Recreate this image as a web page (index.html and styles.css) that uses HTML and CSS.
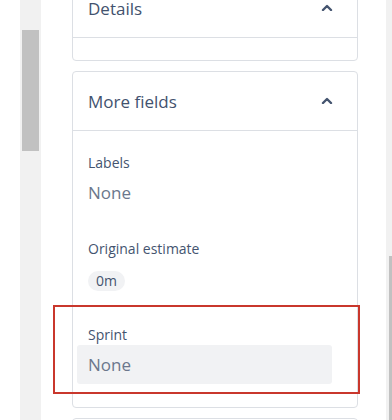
FILE: index.html
```html
<!DOCTYPE html>
<html lang="en">
<head>
    <meta charset="utf-8">
    <title>Issue fields</title>
    <link rel="stylesheet" href="styles.css">
</head>
<body>
    <div class="page">
        <div class="scrollbar left"><div class="thumb"></div></div>
        <main class="panel">
            <section class="card">
                <header class="card-head">
                    <h2>Details</h2>
                    <svg class="chevron" width="12" height="8" viewBox="0 0 12 8"><path d="M2 7 6 3 10 7" fill="none" stroke="currentColor" stroke-width="2.4" stroke-linecap="round" stroke-linejoin="round"/></svg>
                </header>
                <div class="card-body empty"></div>
            </section>
            <section class="card">
                <header class="card-head">
                    <h2>More fields</h2>
                    <svg class="chevron" width="12" height="8" viewBox="0 0 12 8"><path d="M2 7 6 3 10 7" fill="none" stroke="currentColor" stroke-width="2.4" stroke-linecap="round" stroke-linejoin="round"/></svg>
                </header>
                <div class="card-body">
                    <div class="field">
                        <div class="label">Labels</div>
                        <div class="value">None</div>
                    </div>
                    <div class="field">
                        <div class="label">Original estimate</div>
                        <span class="badge">0m</span>
                    </div>
                    <div class="field highlighted">
                        <div class="label">Sprint</div>
                        <div class="value input">None</div>
                    </div>
                </div>
            </section>
            <section class="card"></section>
        </main>
        <div class="scrollbar right"><div class="thumb"></div></div>
    </div>
</body>
</html>
```

FILE: styles.css
```css
body {
    margin: 0;
    background: #fff;
    font-family: "Open Sans", "Noto Sans", sans-serif;
    color: #44546f;
}

.page {
    display: flex;
    height: 420px;
    overflow: hidden;
}

.scrollbar {
    background: #f1f1f1;
}
.scrollbar.left {
    margin-left: 20px;
    width: 21px;
    padding-top: 30px;
}
.scrollbar.left .thumb {
    margin-left: 2px;
    width: 17px;
    height: 121px;
    background: #c1c1c1;
}
.scrollbar.right {
    margin-left: auto;
    width: 6px;
    display: flex;
    justify-content: flex-end;
    padding-top: 256px;
}
.scrollbar.right .thumb {
    width: 3px;
    height: 200px;
    background: #c1c1c1;
}

.panel {
    margin-left: 31px;
    margin-top: -22px;
    width: 286px;
    display: flex;
    flex-direction: column;
    gap: 10px;
}

.card {
    border: 1px solid #dcdfe4;
    border-radius: 4px;
    flex-shrink: 0;
}
.card:last-child {
    height: 40px;
}

.card-head {
    height: 58px;
    display: flex;
    align-items: center;
    justify-content: space-between;
    padding: 0 24px 0 15px;
    border-bottom: 1px solid #dcdfe4;
}
.card-head h2 {
    margin: 0;
    font-size: 17px;
    line-height: 18px;
    font-weight: 500;
    color: #42526e;
    position: relative;
    top: 1px;
}
.chevron {
    color: #44546f;
    position: relative;
    top: -1px;
}

.card-body {
    padding: 22px 24px 23px 15px;
}
.card-body.empty {
    height: 22px;
    padding: 0;
}

.field + .field {
    margin-top: 34px;
}
.label {
    font-size: 14px;
    line-height: 20px;
    font-weight: 500;
    color: #44546f;
}
.value {
    margin-top: 8px;
    font-size: 17px;
    line-height: 24px;
    color: #6b778c;
}
.badge {
    display: inline-block;
    margin-top: 12px;
    padding: 0 8px;
    height: 20px;
    line-height: 20px;
    border-radius: 10px;
    background: #f1f2f4;
    font-size: 14px;
    color: #44546f;
}

.highlighted {
    position: relative;
}
.highlighted::after {
    content: "";
    position: absolute;
    left: -35px;
    top: -20px;
    width: 303px;
    height: 85px;
    border: 2px solid #c9372c;
}
.value.input {
    margin: 0 0 0 -11px;
    padding: 0 11px;
    height: 39px;
    line-height: 40px;
    width: 233px;
    background: #f1f2f4;
    border-radius: 3px;
}
```
